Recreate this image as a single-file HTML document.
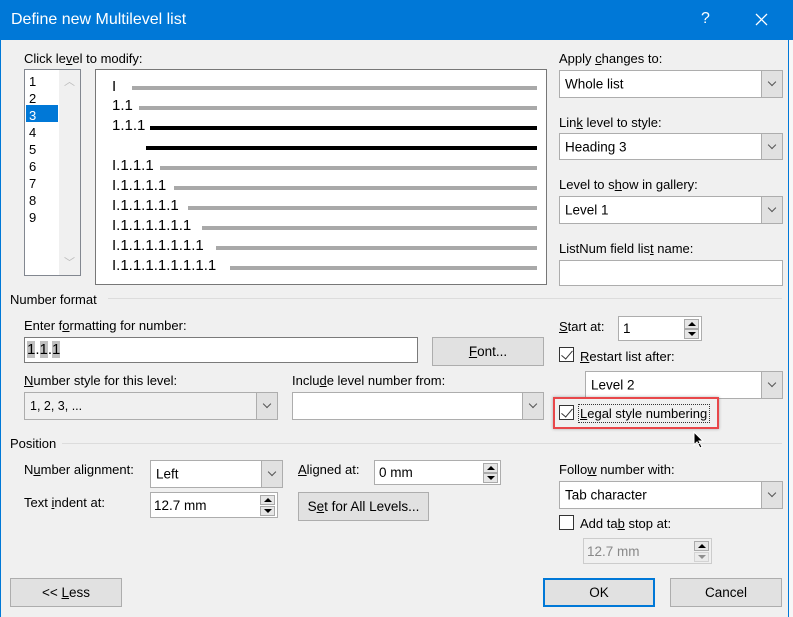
<!DOCTYPE html>
<html><head><meta charset="utf-8"><style>
*{box-sizing:border-box;margin:0;padding:0}
body{width:793px;height:617px;background:#f0f0f0;font-family:"Liberation Sans",sans-serif;font-size:13px;color:#000;position:relative;overflow:hidden}
.a{position:absolute;white-space:nowrap}
.t{position:absolute;white-space:nowrap;line-height:15px}
.box{position:absolute;background:#fff;border:1px solid #7a7a7a}
.combo{position:absolute;background:#fff;border:1px solid #adadad}
.combo .txt{position:absolute;left:5px;top:50%;transform:translateY(-50%);font-size:13.5px}
.combo .dd{position:absolute;right:0;top:0;bottom:0;width:21px;background:#e1e1e1;border-left:1px solid #adadad}
.dd:after{content:"";position:absolute;left:7px;top:8px;width:5px;height:5px;border-right:1px solid #555;border-bottom:1px solid #555;transform:rotate(45deg)}
.btn{position:absolute;background:#e1e1e1;border:1px solid #adadad;text-align:center;font-size:13.5px}
.spin{position:absolute;background:#fff;border:1px solid #adadad}
.spin .sb{position:absolute;right:2px;width:15px;height:10px;background:#e6e6e6;border:1px solid #aaa}
.up:after{content:"";position:absolute;left:3px;top:2px;border-left:4px solid transparent;border-right:4px solid transparent;border-bottom:4px solid #000}
.dn:after{content:"";position:absolute;left:3px;top:2px;border-left:4px solid transparent;border-right:4px solid transparent;border-top:4px solid #000}
.cb{position:absolute;width:15px;height:15px;background:#fff;border:1px solid #333}
.chk:after{content:"";position:absolute;left:4px;top:0px;width:5px;height:10px;border-right:1.3px solid #333;border-bottom:1.3px solid #333;transform:rotate(40deg)}
.sep{position:absolute;height:1px;background:#dcdcdc}
.bar{position:absolute;height:4px;background:#a9a9a9}
.bk{position:absolute;height:4px;background:#000}
.pv{position:absolute;font-size:15px;line-height:16px;left:112px}
u{text-decoration:underline}
</style></head><body>
<div class="a" style="left:0;top:0;width:793px;height:40px;background:#0078d7"></div>
<div class="a" style="left:0;top:0;width:1px;height:617px;background:#0078d7"></div>
<div class="a" style="left:788px;top:0;width:1px;height:617px;background:#0078d7"></div>
<div class="a" style="left:789px;top:40px;width:4px;height:577px;background:#f7f7f7"></div>
<div class="t" style="left:11px;top:11px;color:#fff;font-size:16px;line-height:18px">Define new Multilevel list</div>
<div class="t" style="left:701px;top:11px;color:#fff;font-size:16px">?</div>
<svg class="a" style="left:755px;top:13px" width="13" height="13" viewBox="0 0 13 13"><path d="M1 1L12 12M12 1L1 12" stroke="#fff" stroke-width="1.3"/></svg>

<div class="t" style="left:24px;top:51px">Click le<u>v</u>el to modify:</div>
<div class="box" style="left:24px;top:69px;width:57px;height:207px;border-color:#828790"></div>
<div class="a" style="left:59px;top:70px;width:21px;height:205px;background:#f0f0f0"></div>
<div class="t" style="left:64px;top:75px;color:#bbb;font-size:11px">︿</div>
<div class="t" style="left:64px;top:256px;color:#bbb;font-size:11px">﹀</div>
<div class="a" style="left:26px;top:105px;width:32px;height:17px;background:#0078d7"></div>
<div class="t" style="left:29px;top:73px;font-size:13px;line-height:17px">1<br>2<br><span style="color:#fff">3</span><br>4<br>5<br>6<br>7<br>8<br>9</div>

<div class="box" style="left:95px;top:69px;width:452px;height:216px;border-color:#777"></div>
<div class="pv" style="top:79px">I</div><div class="bar" style="left:132px;top:86px;width:405px"></div>
<div class="pv" style="top:98px">1.1</div><div class="bar" style="left:139px;top:106px;width:398px"></div>
<div class="pv" style="top:118px">1.1.1</div><div class="bk" style="left:150px;top:126px;width:387px"></div>
<div class="bk" style="left:146px;top:146px;width:391px"></div>
<div class="pv" style="top:158px">I.1.1.1</div><div class="bar" style="left:160px;top:166px;width:377px"></div>
<div class="pv" style="top:178px">I.1.1.1.1</div><div class="bar" style="left:174px;top:186px;width:363px"></div>
<div class="pv" style="top:198px">I.1.1.1.1.1</div><div class="bar" style="left:188px;top:206px;width:349px"></div>
<div class="pv" style="top:218px">I.1.1.1.1.1.1</div><div class="bar" style="left:202px;top:226px;width:335px"></div>
<div class="pv" style="top:238px">I.1.1.1.1.1.1.1</div><div class="bar" style="left:216px;top:246px;width:321px"></div>
<div class="pv" style="top:258px">I.1.1.1.1.1.1.1.1</div><div class="bar" style="left:230px;top:266px;width:307px"></div>

<div class="t" style="left:559px;top:51px">Apply <u>c</u>hanges to:</div>
<div class="combo" style="left:559px;top:70px;width:224px;height:28px"><span class="txt">Whole list</span><div class="dd"></div></div>
<div class="t" style="left:559px;top:115px">Lin<u>k</u> level to style:</div>
<div class="combo" style="left:559px;top:133px;width:224px;height:27px"><span class="txt">Heading 3</span><div class="dd"></div></div>
<div class="t" style="left:559px;top:177px">Level to s<u>h</u>ow in gallery:</div>
<div class="combo" style="left:559px;top:196px;width:224px;height:28px"><span class="txt">Level 1</span><div class="dd"></div></div>
<div class="t" style="left:559px;top:241px">ListNum field lis<u>t</u> name:</div>
<div class="box" style="left:559px;top:260px;width:224px;height:26px;border-color:#adadad"></div>

<div class="t" style="left:10px;top:292px">Number format</div>
<div class="sep" style="left:108px;top:298px;width:674px"></div>
<div class="t" style="left:24px;top:318px">Enter f<u>o</u>rmatting for number:</div>
<div class="box" style="left:24px;top:337px;width:394px;height:26px"></div>
<div class="t" style="left:27px;top:341px;font-size:15px;line-height:17px"><span style="background:#c0c0c0">1</span>.<span style="background:#c0c0c0">1</span>.<span style="background:#c0c0c0">1</span></div>
<div class="btn" style="left:432px;top:337px;width:112px;height:29px;line-height:27px"><u>F</u>ont...</div>
<div class="t" style="left:559px;top:319px"><u>S</u>tart at:</div>
<div class="spin" style="left:618px;top:316px;width:84px;height:25px"><span class="a" style="left:4px;top:4px;font-size:13.5px">1</span><div class="sb up" style="top:2px"></div><div class="sb dn" style="top:12px"></div></div>
<div class="cb chk" style="left:559px;top:347px"></div>
<div class="t" style="left:580px;top:349px"><u>R</u>estart list after:</div>
<div class="combo" style="left:585px;top:371px;width:198px;height:28px"><span class="txt">Level 2</span><div class="dd"></div></div>

<div class="t" style="left:24px;top:373px"><u>N</u>umber style for this level:</div>
<div class="combo" style="left:24px;top:392px;width:254px;height:28px;background:#f0f0f0"><span class="txt" style="font-size:12.5px">1, 2, 3, ...</span><div class="dd"></div></div>
<div class="t" style="left:292px;top:373px">Inclu<u>d</u>e level number from:</div>
<div class="combo" style="left:292px;top:392px;width:252px;height:28px"><div class="dd"></div></div>

<div class="a" style="left:553px;top:397px;width:166px;height:32px;border:2px solid #e8474a;box-shadow:0 0 3px rgba(0,0,0,.3)"></div>
<div class="cb chk" style="left:559px;top:405px"></div>
<div class="a" style="left:578px;top:404px;width:132px;height:19px;border:1px dotted #333"></div>
<div class="t" style="left:580px;top:406px"><u>L</u>egal style numbering</div>
<svg class="a" style="left:693px;top:431px" width="12" height="18" viewBox="0 0 12 18"><path d="M1 1 L1 14 L4 11 L7 17 L9 16 L6 10 L10 10 Z" fill="#000" stroke="#fff" stroke-width="1"/></svg>

<div class="t" style="left:10px;top:436px">Position</div>
<div class="sep" style="left:62px;top:443px;width:720px"></div>
<div class="t" style="left:24px;top:462px">N<u>u</u>mber alignment:</div>
<div class="combo" style="left:150px;top:460px;width:133px;height:28px"><span class="txt">Left</span><div class="dd"></div></div>
<div class="t" style="left:298px;top:462px"><u>A</u>ligned at:</div>
<div class="spin" style="left:374px;top:460px;width:127px;height:25px"><span class="a" style="left:4px;top:4px;font-size:13.5px">0 mm</span><div class="sb up" style="top:2px"></div><div class="sb dn" style="top:12px"></div></div>
<div class="t" style="left:24px;top:495px">Text <u>i</u>ndent at:</div>
<div class="spin" style="left:150px;top:492px;width:128px;height:26px"><span class="a" style="left:3px;top:5px;font-size:13.5px">12.7 mm</span><div class="sb up" style="top:2px"></div><div class="sb dn" style="top:13px"></div></div>
<div class="btn" style="left:298px;top:492px;width:131px;height:29px;line-height:27px">S<u>e</u>t for All Levels...</div>

<div class="t" style="left:559px;top:462px">Follo<u>w</u> number with:</div>
<div class="combo" style="left:559px;top:481px;width:224px;height:28px"><span class="txt">Tab character</span><div class="dd"></div></div>
<div class="cb" style="left:559px;top:515px"></div>
<div class="t" style="left:580px;top:516px">Add ta<u>b</u> stop at:</div>
<div class="spin" style="left:583px;top:538px;width:129px;height:26px;background:#f0f0f0;border-color:#ccc"><span class="a" style="left:3px;top:5px;font-size:13.5px;color:#888">12.7 mm</span><div class="sb up" style="top:2px"></div><div class="sb dn" style="top:13px;opacity:.4"></div></div>

<div class="btn" style="left:10px;top:578px;width:112px;height:29px;line-height:27px">&lt;&lt; <u>L</u>ess</div>
<div class="btn" style="left:543px;top:578px;width:112px;height:29px;line-height:25px;border:2px solid #0078d7">OK</div>
<div class="btn" style="left:670px;top:578px;width:112px;height:29px;line-height:27px">Cancel</div>
</body></html>
